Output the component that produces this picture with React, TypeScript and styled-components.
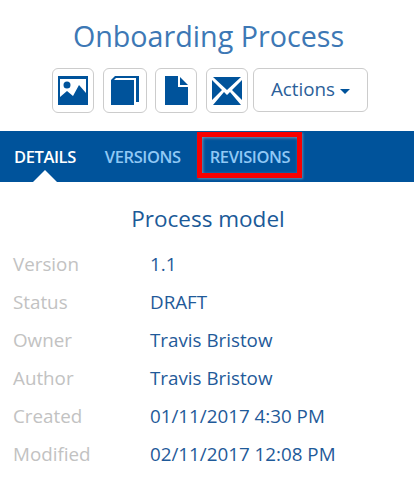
import { Fragment } from "react";
import styled, { createGlobalStyle } from "styled-components";

const GlobalStyle = createGlobalStyle`
  html, body {
    margin: 0;
    padding: 0;
    background: #fff;
    font-family: "Open Sans", sans-serif;
  }
`;

const Page = styled.div`
  width: 414px;
  height: 488px;
  overflow: hidden;
`;

const Title = styled.h1`
  margin: 0;
  padding: 17px 0 0 3px;
  height: 51px;
  box-sizing: border-box;
  text-align: center;
  font-size: 28.7px;
  line-height: 38px;
  font-weight: 400;
  color: #3d78b5;
`;

const Toolbar = styled.div`
  display: flex;
  height: 80px;
  box-sizing: border-box;
  padding: 17px 0 0 52px;
`;

const IconButton = styled.button<{ $width: number; $gap: number }>`
  width: ${(p) => p.$width}px;
  height: 45px;
  margin-right: ${(p) => p.$gap}px;
  padding: 0;
  box-sizing: border-box;
  background: #fff;
  border: 1px solid #ccc;
  border-radius: 6px;
  display: flex;
  align-items: center;
  justify-content: center;
`;

const ActionsButton = styled.button`
  width: 115px;
  height: 44px;
  padding: 0 0 2px;
  box-sizing: border-box;
  background: #fff;
  border: 1px solid #ccc;
  border-radius: 6px;
  font-family: inherit;
  font-size: 18.8px;
  color: #2a6099;
  display: flex;
  align-items: center;
  justify-content: center;
  gap: 5px;
`;

const Caret = styled.span`
  width: 0;
  height: 0;
  margin-top: 5px;
  border-left: 5px solid transparent;
  border-right: 5px solid transparent;
  border-top: 5px solid #00539b;
`;

const TabBar = styled.nav`
  display: flex;
  gap: 29px;
  height: 51px;
  background: #00539b;
  padding-left: 14px;
`;

const Tab = styled.div<{ $active?: boolean }>`
  position: relative;
  display: flex;
  align-items: center;
  font-size: 16.5px;
  font-weight: 600;
  letter-spacing: -0.4px;
  color: ${(p) => (p.$active ? "#fff" : "#90c8f5")};
`;

const Highlight = styled.span`
  position: absolute;
  left: -13px;
  right: -12px;
  top: 1px;
  bottom: 4px;
  border: 5px solid #f80000;
  box-shadow:
    1px 1px 2px rgba(190, 190, 190, 0.5),
    inset 1px 1px 3px rgba(190, 190, 190, 0.6);
`;

const Notch = styled.span`
  position: absolute;
  left: 50%;
  bottom: 0;
  margin-left: -12px;
  width: 0;
  height: 0;
  border-left: 12px solid transparent;
  border-right: 12px solid transparent;
  border-bottom: 12px solid #fff;
`;

const Subtitle = styled.h2`
  margin: 0;
  padding: 22px 0 0 2px;
  text-align: center;
  font-size: 22.5px;
  line-height: 30px;
  font-weight: 400;
  color: #1b5a98;
`;

const Details = styled.dl`
  display: grid;
  grid-template-columns: 137px 1fr;
  grid-auto-rows: 38px;
  margin: 0;
  padding: 11px 0 0 13px;
  font-size: 18.8px;
  line-height: 38px;
`;

const Label = styled.dt`
  color: #c2c2c2;
`;

const Value = styled.dd`
  margin: 0;
  color: #1f5a99;
`;

const rows: [string, string][] = [
  ["Version", "1.1"],
  ["Status", "DRAFT"],
  ["Owner", "Travis Bristow"],
  ["Author", "Travis Bristow"],
  ["Created", "01/11/2017 4:30 PM"],
  ["Modified", "02/11/2017 12:08 PM"],
];

const blue = "#00539b";

const App = () => (
  <Page>
    <GlobalStyle />
    <Title>Onboarding Process</Title>
    <Toolbar>
      <IconButton $width={42} $gap={9}>
        <svg width="30" height="29" viewBox="0 0 30 29">
          <path
            fill={blue}
            fillRule="evenodd"
            d="M0 0h30v29H0zM2 3v18l7-6 6 5 6-11 7 8V3zM9 5.500a3.500 3.500 0 1 1 0 7 3.500 3.500 0 0 1 0-7z"
          />
        </svg>
      </IconButton>
      <IconButton $width={44} $gap={8}>
        <svg width="28" height="29" viewBox="0 0 28 29">
          <path fill={blue} d="M0 4h23v25H0z" />
          <path fill={blue} d="M0 4l4-4h24v26h-3V2H5L3 4z" />
        </svg>
      </IconButton>
      <IconButton $width={42} $gap={9}>
        <svg width="23" height="29" viewBox="0 0 23 29">
          <path fill={blue} d="M0 0h13v11h10v18H0zM15 1l8 8h-8z" />
        </svg>
      </IconButton>
      <IconButton $width={42} $gap={5}>
        <svg width="30" height="28" viewBox="0 0 30 28">
          <path
            fill={blue}
            d="M1 0h28L15 13zM0 3l10 10L0 23zM30 3v20L20 13zM12 15l3 3 3-3 11 13H1z"
          />
        </svg>
      </IconButton>
      <ActionsButton>
        Actions
        <Caret />
      </ActionsButton>
    </Toolbar>
    <TabBar>
      <Tab $active>
        DETAILS
        <Notch />
      </Tab>
      <Tab>VERSIONS</Tab>
      <Tab>
        REVISIONS
        <Highlight />
      </Tab>
    </TabBar>
    <Subtitle>Process model</Subtitle>
    <Details>
      {rows.map(([label, value]) => (
        <Fragment key={label}>
          <Label>{label}</Label>
          <Value>{value}</Value>
        </Fragment>
      ))}
    </Details>
  </Page>
);

export default App;
